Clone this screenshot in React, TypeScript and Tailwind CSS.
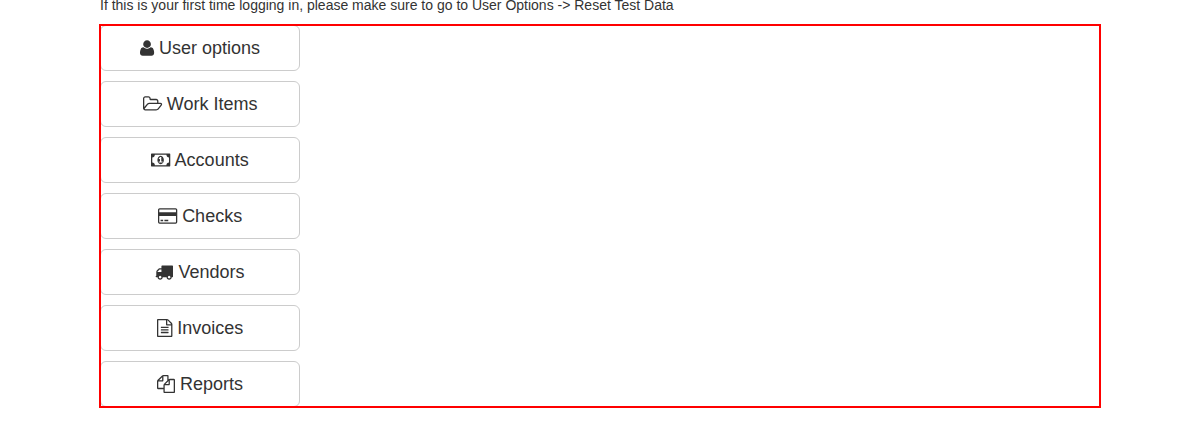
import React from "react";

type Item = { label: string; width: number; svgClass: string; path: string };

// Glyphs use font units: 1792 per em, y pointing up, baseline at 0.
const items: Item[] = [
  {
    label: "User options",
    width: 1408,
    svgClass: "w-[14.14px]",
    path: "M1408 131q0 -120 -73 -189.5t-194 -69.5h-874q-121 0 -194 69.5t-73 189.5q0 53 3.5 103.5t14 109t26.5 108.5t43 97.5t62 81t85.5 53.5t111.5 20q9 0 42 -21.5t74.5 -48t108 -48t133.5 -21.5t133.5 21.5t108 48t74.5 48t42 21.5q61 0 111.5 -20t85.5 -53.5t62 -81t43 -97.5t26.5 -108.5t14 -109t3.5 -103.5zM1088 1024q0 -159 -112.5 -271.5t-271.5 -112.5t-271.5 112.5t-112.5 271.5t112.5 271.5t271.5 112.5t271.5 -112.5t112.5 -271.5z",
  },
  {
    label: "Work Items",
    width: 1920,
    svgClass: "w-[19.28px]",
    path: "M1781 605q0 35 -53 35h-1088q-40 0 -85.5 -21.5t-71.5 -52.5l-294 -363q-18 -24 -18 -40q0 -35 53 -35h1088q40 0 86 22t71 53l294 363q18 22 18 39zM640 768h768v160q0 40 -28 68t-68 28h-576q-40 0 -68 28t-28 68v64q0 40 -28 68t-68 28h-320q-40 0 -68 -28t-28 -68v-853l256 315q44 53 116 87.5t140 34.5zM1909 605q0 -62 -46 -120l-295 -363q-43 -53 -116 -87.5t-140 -34.5h-1088q-92 0 -158 66t-66 158v960q0 92 66 158t158 66h320q92 0 158 -66t66 -158v-32h544q92 0 158 -66t66 -158v-160h192q54 0 99 -24.5t67 -70.5q15 -32 15 -68z",
  },
  {
    label: "Accounts",
    width: 1920,
    svgClass: "w-[19.28px]",
    path: "M768 384h384v96h-128v448h-114l-148 -137l77 -80q42 37 55 57h2v-288h-128v-96zM1280 640q0 -70 -21 -142t-59.5 -134t-101.5 -101t-138 -39t-138 39t-101.5 101t-59.5 134t-21 142t21 142t59.5 134t101.5 101t138 39t138 -39t101.5 -101t59.5 -134t21 -142zM1792 384v512q-106 0 -181 75t-75 181h-1152q0 -106 -75 -181t-181 -75v-512q106 0 181 -75t75 -181h1152q0 106 75 181t181 75zM1920 1216v-1152q0 -26 -19 -45t-45 -19h-1792q-26 0 -45 19t-19 45v1152q0 26 19 45t45 19h1792q26 0 45 -19t19 -45z",
  },
  {
    label: "Checks",
    width: 1920,
    svgClass: "w-[19.28px]",
    path: "M1760 1408q66 0 113 -47t47 -113v-1216q0 -66 -47 -113t-113 -47h-1600q-66 0 -113 47t-47 113v1216q0 66 47 113t113 47h1600zM160 1280q-13 0 -22.5 -9.5t-9.5 -22.5v-224h1664v224q0 13 -9.5 22.5t-22.5 9.5h-1600zM1760 0q13 0 22.5 9.5t9.5 22.5v608h-1664v-608q0 -13 9.5 -22.5t22.5 -9.5h1600zM256 128v128h256v-128h-256zM640 128v128h384v-128h-384z",
  },
  {
    label: "Vendors",
    width: 1792,
    svgClass: "w-[18px]",
    path: "M640 128q0 52 -38 90t-90 38t-90 -38t-38 -90t38 -90t90 -38t90 38t38 90zM256 640h384v256h-158q-13 0 -22 -9l-195 -195q-9 -9 -9 -22v-30zM1536 128q0 52 -38 90t-90 38t-90 -38t-38 -90t38 -90t90 -38t90 38t38 90zM1792 1216v-1024q0 -15 -4 -26.5t-13.5 -18.5t-16.5 -11.5t-23.5 -6t-22.5 -2t-25.5 0t-22.5 0.5q0 -106 -75 -181t-181 -75t-181 75t-75 181h-384q0 -106 -75 -181t-181 -75t-181 75t-75 181h-64q-3 0 -22.5 -0.5t-25.5 0t-22.5 2t-23.5 6t-16.5 11.5t-13.5 18.5t-4 26.5q0 26 19 45t45 19v320q0 8 -0.5 35t0 38t2.5 34.5t6.5 37t14 30.5t22.5 30l198 198q19 19 50.5 32t58.5 13h160v192q0 26 19 45t45 19h1024q26 0 45 -19t19 -45z",
  },
  {
    label: "Invoices",
    width: 1536,
    svgClass: "w-[15.43px]",
    path: "M1468 1156q28 -28 48 -76t20 -88v-1152q0 -40 -28 -68t-68 -28h-1344q-40 0 -68 28t-28 68v1600q0 40 28 68t68 28h896q40 0 88 -20t76 -48zM1024 1400v-376h376q-10 29 -22 41l-313 313q-12 12 -41 22zM1408 -128v1024h-416q-40 0 -68 28t-28 68v416h-768v-1536h1280zM384 736q0 14 9 23t23 9h704q14 0 23 -9t9 -23v-64q0 -14 -9 -23t-23 -9h-704q-14 0 -23 9t-9 23v64zM1120 512q14 0 23 -9t9 -23v-64q0 -14 -9 -23t-23 -9h-704q-14 0 -23 9t-9 23v64q0 14 9 23t23 9h704zM1120 256q14 0 23 -9t9 -23v-64q0 -14 -9 -23t-23 -9h-704q-14 0 -23 9t-9 23v64q0 14 9 23t23 9h704z",
  },
  {
    label: "Reports",
    width: 1792,
    svgClass: "w-[18px]",
    path: "M1696 1152q40 0 68 -28t28 -68v-1216q0 -40 -28 -68t-68 -28h-960q-40 0 -68 28t-28 68v288h-544q-40 0 -68 28t-28 68v672q0 40 20 88t48 76l408 408q28 28 76 48t88 20h416q40 0 68 -28t28 -68v-328q68 40 128 40h416zM1152 939l-299 -299h299v299zM512 1323l-299 -299h299v299zM708 676l316 316v416h-384v-416q0 -40 -28 -68t-68 -28h-416v-640h512v256q0 40 20 88t48 76zM1664 -128v1152h-384v-416q0 -40 -28 -68t-68 -28h-416v-640h896z",
  },
];

export default function App() {
  return (
    <main className="h-[432px] overflow-hidden bg-white px-[100px] font-['Liberation_Sans',Arial,sans-serif] text-[#333]">
      <p className="-mt-[5px] mb-[10px] text-[14px] leading-5">
        If this is your first time logging in, please make sure to go to User Options -&gt; Reset Test Data
      </p>
      <nav className="flex flex-col items-start gap-[10px] outline-2 outline-offset-[-1px] outline-[#f00]">
        {items.map(({ label, width, svgClass, path }) => (
          <button
            key={label}
            className="h-[46px] w-[200px] shrink-0 rounded-md border border-[#ccc] bg-white text-center text-[18px] leading-6"
          >
            <svg
              aria-hidden="true"
              viewBox={`0 -1536 ${width} 1792`}
              className={`inline-block h-[18px] overflow-visible fill-current align-[-2.57px] ${svgClass}`}
            >
              <path transform="scale(1,-1)" d={path} />
            </svg>{" "}
            {label}
          </button>
        ))}
      </nav>
    </main>
  );
}
